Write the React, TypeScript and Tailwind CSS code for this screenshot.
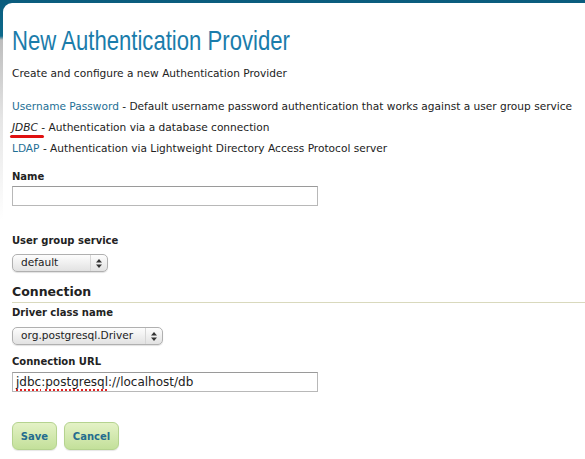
export default function App() {
  const body = "font-['DejaVu_Sans',Verdana,sans-serif]";
  return (
    <div className="min-h-[459px] w-[585px] overflow-hidden bg-[linear-gradient(to_bottom,#0a5c7d_0px,#0d6a8c_36px,#bdbdbd_40px,#e6e6e6_120px,#ffffff_220px)] pl-[3px] pt-[3px]">
      <div className={`min-h-[456px] rounded-tl-[9px] bg-white pl-[9px] text-[#222] ${body}`}>
        <h1 className="origin-left scale-x-[0.79] pt-[22px] font-['Liberation_Sans',Arial,sans-serif] text-[28px] leading-[32px] whitespace-nowrap text-[#1a7cab]">
          New Authentication Provider
        </h1>
        <p className="mt-[9px] text-[10.6px] leading-[14px]">
          Create and configure a new Authentication Provider
        </p>

        <ul className="mt-[16px] flex flex-col text-[10.6px] leading-[21px] whitespace-nowrap">
          <li>
            <span className="text-[#1e6f95]">Username Password</span> - Default username password
            authentication that works against a user group service
          </li>
          <li className="relative">
            <span className="italic">JDBC</span> - Authentication via a database connection
            <span className="absolute left-[-2px] top-[18px] h-[3px] w-[34px] rounded-full bg-[#e01010]" />
          </li>
          <li>
            <span className="text-[#1e6f95]">LDAP</span> - Authentication via Lightweight Directory
            Access Protocol server
          </li>
        </ul>

        <form className="mt-[11px] flex flex-col">
          <label className="text-[10px] font-bold leading-[14px]">Name</label>
          <input
            type="text"
            className="mt-[2px] h-[20px] w-[306px] border border-[#b8b8b8] border-t-[#9a9a9a] bg-white px-[3px] text-[11px] outline-none"
          />

          <label className="mt-[28px] text-[10px] font-bold leading-[14px]">User group service</label>
          <div className="mt-[6px] flex h-[18px] w-[96px] items-center justify-between rounded-[5px] border border-[#b0b0b0] bg-[linear-gradient(to_bottom,#fdfdfd,#e2e2e2)] pl-[8px] pr-[5px] text-[10.6px] shadow-[0_1px_1px_rgba(0,0,0,0.12)]">
            <span>default</span>
            <Arrows />
          </div>

          <div className="mt-[11px] border-b border-[#d9d9bd] pb-[1px] text-[12.5px] font-bold leading-[18px] text-[#222]">
            Connection
          </div>

          <label className="mt-[3px] text-[10px] font-bold leading-[14px]">Driver class name</label>
          <div className="mt-[7px] flex h-[18px] w-[151px] items-center justify-between rounded-[5px] border border-[#b0b0b0] bg-[linear-gradient(to_bottom,#fdfdfd,#e2e2e2)] pl-[8px] pr-[5px] text-[10.6px] shadow-[0_1px_1px_rgba(0,0,0,0.12)]">
            <span>org.postgresql.Driver</span>
            <Arrows />
          </div>

          <label className="mt-[10px] text-[10px] font-bold leading-[14px]">Connection URL</label>
          <div className="mt-[3px] flex h-[20px] w-[306px] items-center border border-[#b8b8b8] border-t-[#9a9a9a] bg-white px-[3px] text-[12px]">
            <span className="underline decoration-[#e02020] decoration-dotted decoration-[1.5px] underline-offset-[3px]">jdbc</span>
            <span>:</span>
            <span className="underline decoration-[#e02020] decoration-dotted decoration-[1.5px] underline-offset-[3px]">postgresql</span>
            <span>://localhost/db</span>
          </div>

          <div className="mt-[30px] flex gap-[7px]">
            <button
              type="button"
              className="h-[28px] w-[45px] rounded-[6px] border border-[#b5d38f] bg-[linear-gradient(to_bottom,#e4f2c6,#c3e09a)] text-[10px] font-bold text-[#246c8f] shadow-[0_1px_1px_rgba(0,0,0,0.1)]"
            >
              Save
            </button>
            <button
              type="button"
              className="h-[28px] w-[55px] rounded-[6px] border border-[#b5d38f] bg-[linear-gradient(to_bottom,#e4f2c6,#c3e09a)] text-[10px] font-bold text-[#246c8f] shadow-[0_1px_1px_rgba(0,0,0,0.1)]"
            >
              Cancel
            </button>
          </div>
        </form>
      </div>
    </div>
  );
}

function Arrows() {
  return (
    <span className="flex h-full items-center border-l border-[#d6d6d6] pl-[5px]">
      <svg width="6" height="9" viewBox="0 0 6 9">
        <path d="M3 0 L6 3.5 H0 Z" fill="#333" />
        <path d="M3 9 L6 5.5 H0 Z" fill="#333" />
      </svg>
    </span>
  );
}
